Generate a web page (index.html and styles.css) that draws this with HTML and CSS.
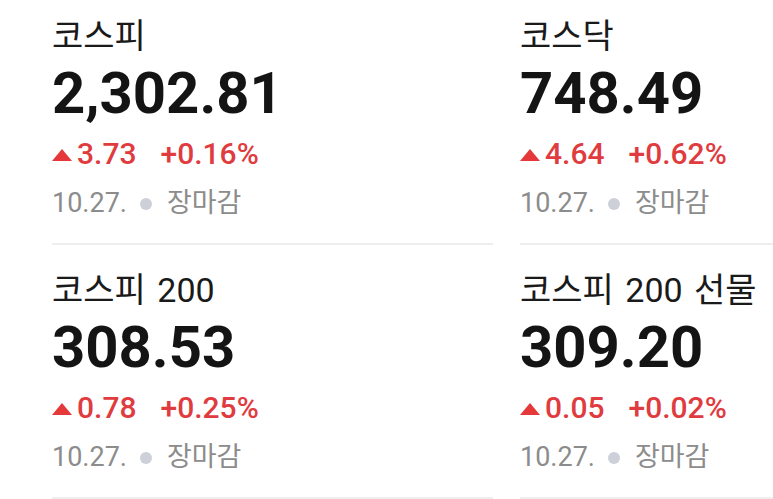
FILE: index.html
```html
<!DOCTYPE html>
<html lang="ko">
<head>
<meta charset="utf-8">
<link rel="stylesheet" href="styles.css">
</head>
<body>
<div class="grid">
  <div class="cell">
    <div class="title">코스피</div>
    <div class="value">2,302.81</div>
    <div class="change"><svg class="tri" viewBox="0 0 20 12"><polygon points="10,0 20,12 0,12"/></svg><span class="diff">3.73</span><span class="rate">+0.16%</span></div>
    <div class="meta"><span>10.27.</span><span class="dot"></span><span>장마감</span></div>
  </div>
  <div class="cell">
    <div class="title">코스닥</div>
    <div class="value">748.49</div>
    <div class="change"><svg class="tri" viewBox="0 0 20 12"><polygon points="10,0 20,12 0,12"/></svg><span class="diff">4.64</span><span class="rate">+0.62%</span></div>
    <div class="meta"><span>10.27.</span><span class="dot"></span><span>장마감</span></div>
  </div>
  <div class="cell">
    <div class="title">코스피 200</div>
    <div class="value">308.53</div>
    <div class="change"><svg class="tri" viewBox="0 0 20 12"><polygon points="10,0 20,12 0,12"/></svg><span class="diff">0.78</span><span class="rate">+0.25%</span></div>
    <div class="meta"><span>10.27.</span><span class="dot"></span><span>장마감</span></div>
  </div>
  <div class="cell">
    <div class="title">코스피 200 선물</div>
    <div class="value">309.20</div>
    <div class="change"><svg class="tri" viewBox="0 0 20 12"><polygon points="10,0 20,12 0,12"/></svg><span class="diff">0.05</span><span class="rate">+0.02%</span></div>
    <div class="meta"><span>10.27.</span><span class="dot"></span><span>장마감</span></div>
  </div>
</div>
</body>
</html>
```

FILE: styles.css
```css
html {
  overflow: hidden;
  background: #ffffff;
}
body {
  margin: 0;
  overflow: hidden;
  font-family: Roboto, "Noto Sans CJK KR", sans-serif;
  color: #141414;
}
.grid {
  display: grid;
  grid-template-columns: 441px 441px;
  column-gap: 27px;
  padding-left: 52px;
  margin-top: -9px;
  width: 961px;
}
.cell {
  padding-top: 26px;
  padding-bottom: 12px;
  border-bottom: 2px solid #eeeeee;
}
.title {
  font-size: 34px;
  line-height: 38px;
  font-weight: 400;
  word-spacing: 3px;
  white-space: nowrap;
  color: #1a1a1a;
}
.value {
  font-size: 58px;
  line-height: 77px;
  font-weight: 700;
}
.change {
  display: flex;
  align-items: baseline;
  font-size: 30px;
  line-height: 44px;
  font-weight: 500;
  color: #e03b3e;
}
.tri {
  width: 20px;
  height: 12px;
  fill: #e5383b;
  margin-right: 5px;
  align-self: center;
  margin-top: 1px;
}
.rate {
  margin-left: 24px;
}
.meta {
  display: flex;
  align-items: center;
  font-size: 27px;
  line-height: 55px;
  color: #8c8c8c;
}
.dot {
  width: 12px;
  height: 12px;
  border-radius: 50%;
  background: #cdd0d8;
  margin: 0 15px 0 13px;
}
```
